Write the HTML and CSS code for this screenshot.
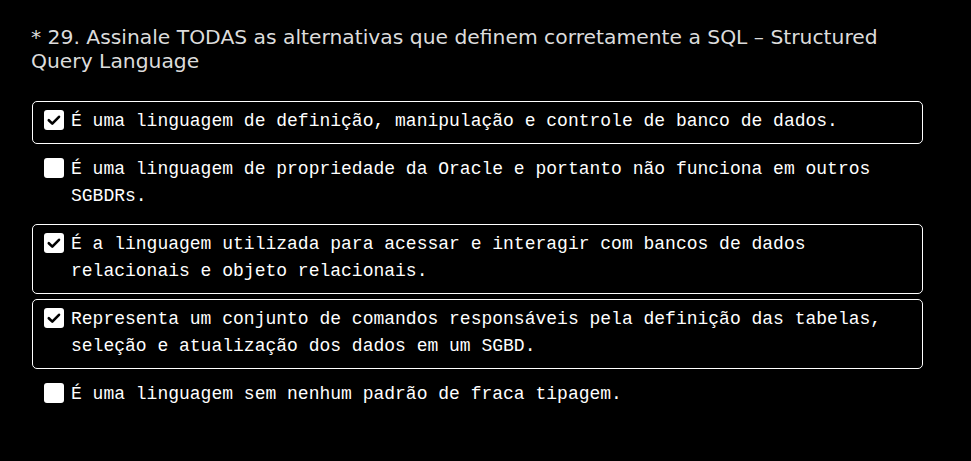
FILE: index.html
```html
<!DOCTYPE html>
<html lang="pt">
<head>
<meta charset="utf-8">
<link rel="stylesheet" href="styles.css">
</head>
<body>
<div class="question">
  <h1 class="title">* 29. Assinale TODAS as alternativas que definem corretamente a SQL – Structured Query Language</h1>
  <div class="options">
    <label class="option checked">
      <span class="box"><svg viewBox="0 0 20 20" width="20" height="20"><path d="M4.8 10.2 L8.3 13.6 L15 6.8" fill="none" stroke="#000" stroke-width="2.6" stroke-linecap="round" stroke-linejoin="round"/></svg></span>
      <span class="text">É uma linguagem de definição, manipulação e controle de banco de dados.</span>
    </label>
    <label class="option">
      <span class="box"></span>
      <span class="text">É uma linguagem de propriedade da Oracle e portanto não funciona em outros SGBDRs.</span>
    </label>
    <label class="option checked">
      <span class="box"><svg viewBox="0 0 20 20" width="20" height="20"><path d="M4.8 10.2 L8.3 13.6 L15 6.8" fill="none" stroke="#000" stroke-width="2.6" stroke-linecap="round" stroke-linejoin="round"/></svg></span>
      <span class="text">É a linguagem utilizada para acessar e interagir com bancos de dados relacionais e objeto relacionais.</span>
    </label>
    <label class="option checked">
      <span class="box"><svg viewBox="0 0 20 20" width="20" height="20"><path d="M4.8 10.2 L8.3 13.6 L15 6.8" fill="none" stroke="#000" stroke-width="2.6" stroke-linecap="round" stroke-linejoin="round"/></svg></span>
      <span class="text">Representa um conjunto de comandos responsáveis pela definição das tabelas, seleção e atualização dos dados em um SGBD.</span>
    </label>
    <label class="option">
      <span class="box"></span>
      <span class="text">É uma linguagem sem nenhum padrão de fraca tipagem.</span>
    </label>
  </div>
</div>
</body>
</html>
```

FILE: styles.css
```css
html, body {
  margin: 0;
  padding: 0;
  background: #000;
}
.question {
  padding: 25px 48px 0 31px;
}
.title {
  margin: 0 0 28px 0;
  font-family: "DejaVu Sans", Verdana, sans-serif;
  font-weight: normal;
  font-size: 20.3px;
  line-height: 24px;
  color: #dcdcdc;
}
.options {
  display: flex;
  flex-direction: column;
  gap: 5px;
  margin-left: 1px;
}
.option {
  display: flex;
  align-items: flex-start;
  gap: 7px;
  padding: 6px 11px 8px 11px;
  border: 1px solid transparent;
  border-radius: 5px;
  font-family: "Liberation Mono", "Courier New", monospace;
  font-size: 18px;
  line-height: 27px;
  color: #fff;
}
.option.checked {
  border-color: #fff;
}
.box {
  flex: none;
  width: 20px;
  height: 20px;
  margin-top: 2px;
  background: #fff;
  border-radius: 3px;
  display: flex;
}
.text {
  flex: 1;
}
```
